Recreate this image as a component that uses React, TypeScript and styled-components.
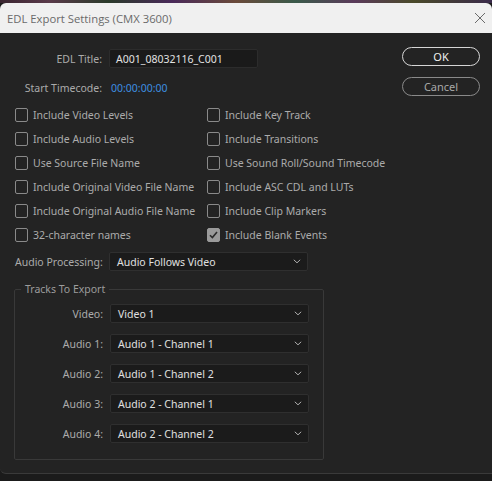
import React from "react";
import styled, { createGlobalStyle } from "styled-components";

const Global = createGlobalStyle`
  html, body { margin: 0; padding: 0; background: #1b1b1b; }
  * { box-sizing: border-box; }
`;

const FONT = `"Noto Sans", "Open Sans", Arial, sans-serif`;

const Window = styled.div`
  width: 492px;
  height: 481px;
  display: flex;
  flex-direction: column;
  background: #1b1b1b;
  font-family: ${FONT};
  overflow: hidden;
`;

const Strip = styled.div`
  height: 3px;
  background: linear-gradient(90deg, #3a2530 0%, #5a3a4a 10%, #2a3a2a 22%, #4a2a5a 35%, #6a4a3a 48%, #3a5a4a 60%, #5a3a5a 72%, #4a4a2a 84%, #3a2a4a 100%);
`;

const TitleBar = styled.div`
  height: 30px;
  background: #f0f0f0;
  display: flex;
  align-items: center;
  justify-content: space-between;
  padding: 0 6px 0 7px;
  border-top-left-radius: 6px;
  border-top-right-radius: 6px;
`;

const Title = styled.span`
  font-family: "Open Sans", "Noto Sans", sans-serif;
  font-size: 11.3px;
  color: #6a6a6a;
`;

const Body = styled.div`
  height: 441px;
  background: #232323;
  border-bottom: 1px solid #3a3a3a;
  border-bottom-left-radius: 6px;
  padding: 14px 12px 0 15px;
  display: flex;
  flex-direction: column;
`;

const Top = styled.div`
  display: flex;
  justify-content: space-between;
`;

const FormGrid = styled.div`
  display: grid;
  grid-template-columns: 87px auto;
  column-gap: 7px;
  align-items: center;
  row-gap: 10px;
  margin-top: 1px;
`;

const Label = styled.span`
  font-size: 10.5px;
  color: #ababab;
  text-align: right;
  white-space: nowrap;
`;

const TextInput = styled.div`
  width: 149px;
  height: 19px;
  background: #1a1a1a;
  border: 1px solid #2c2c2c;
  border-radius: 2px;
  font-size: 10.5px;
  color: #e2e2e2;
  display: flex;
  align-items: center;
  padding-left: 6px;
`;

const Timecode = styled.span`
  font-size: 10.5px;
  color: #3d8ee0;
  padding-left: 2px;
`;

const Buttons = styled.div`
  display: flex;
  flex-direction: column;
  gap: 11px;
`;

const Btn = styled.div<{ $primary?: boolean }>`
  width: 78px;
  height: 19px;
  border-radius: 10px;
  border: 1.5px solid ${(p) => (p.$primary ? "#d6d6d6" : "#8a8a8a")};
  color: ${(p) => (p.$primary ? "#f0f0f0" : "#a8a8a8")};
  font-size: 11px;
  display: flex;
  align-items: center;
  justify-content: center;
`;

const Checks = styled.div`
  display: grid;
  grid-template-columns: 192px auto;
  grid-auto-rows: 24px;
  margin-top: 7px;
`;

const CheckRow = styled.label`
  display: flex;
  align-items: center;
  gap: 5px;
  font-size: 10.5px;
  color: #ababab;
  white-space: nowrap;
`;

const Box = styled.span<{ $on?: boolean }>`
  width: 13px;
  height: 14px;
  border: 1.5px solid ${(p) => (p.$on ? "#9a9a9a" : "#8a8a8a")};
  background: ${(p) => (p.$on ? "#9a9a9a" : "transparent")};
  border-radius: 2px;
  display: flex;
  align-items: center;
  justify-content: center;
  flex-shrink: 0;
`;

const SelectBox = styled.div`
  width: 199px;
  height: 19px;
  background: #1b1b1b;
  border: 1px solid #2f2f2f;
  border-radius: 2px;
  display: flex;
  align-items: center;
  justify-content: space-between;
  padding: 0 6px 0 7px;
  font-size: 10.5px;
  color: #e0e0e0;
`;

const ProcRow = styled.div`
  display: grid;
  grid-template-columns: 87px auto;
  column-gap: 7px;
  align-items: center;
  margin-top: 5px;
`;

const Fieldset = styled.fieldset`
  margin: 11px 0 0 -1px;
  width: 310px;
  height: 178px;
  border: 1px solid #393939;
  border-radius: 2px;
  padding: 8px 0 0 0;
  display: grid;
  grid-template-columns: 88px auto;
  column-gap: 7px;
  row-gap: 11px;
  align-content: start;
  align-items: center;
`;

const Legend = styled.legend`
  font-size: 10.5px;
  color: #9c9c9c;
  padding: 0 4px;
  margin-left: 6px;
`;

const Chevron = () => (
  <svg width="8" height="5" viewBox="0 0 8 5">
    <path d="M0.8 0.8 L4 3.8 L7.2 0.8" fill="none" stroke="#b0b0b0" strokeWidth="1" />
  </svg>
);

const Check = ({ on, label }: { on?: boolean; label: string }) => (
  <CheckRow>
    <Box $on={on}>
      {on && (
        <svg width="9" height="8" viewBox="0 0 9 8">
          <path d="M1 4.2 L3.4 6.6 L8 1" fill="none" stroke="#2a2a2a" strokeWidth="1.6" />
        </svg>
      )}
    </Box>
    {label}
  </CheckRow>
);

const Select = ({ value }: { value: string }) => (
  <SelectBox>
    <span>{value}</span>
    <Chevron />
  </SelectBox>
);

const checks: [string, boolean][] = [
  ["Include Video Levels", false],
  ["Include Key Track", false],
  ["Include Audio Levels", false],
  ["Include Transitions", false],
  ["Use Source File Name", false],
  ["Use Sound Roll/Sound Timecode", false],
  ["Include Original Video File Name", false],
  ["Include ASC CDL and LUTs", false],
  ["Include Original Audio File Name", false],
  ["Include Clip Markers", false],
  ["32-character names", false],
  ["Include Blank Events", true],
];

const tracks: [string, string][] = [
  ["Video:", "Video 1"],
  ["Audio 1:", "Audio 1 - Channel 1"],
  ["Audio 2:", "Audio 1 - Channel 2"],
  ["Audio 3:", "Audio 2 - Channel 1"],
  ["Audio 4:", "Audio 2 - Channel 2"],
];

export default function App() {
  return (
    <Window>
      <Global />
      <Strip />
      <TitleBar>
        <Title>EDL Export Settings (CMX 3600)</Title>
        <svg width="12" height="12" viewBox="0 0 12 12">
          <path d="M1 1 L11 11 M11 1 L1 11" stroke="#6a6a6a" strokeWidth="1" />
        </svg>
      </TitleBar>
      <Body>
        <Top>
          <FormGrid>
            <Label>EDL Title:</Label>
            <TextInput>A001_08032116_C001</TextInput>
            <Label>Start Timecode:</Label>
            <Timecode>00:00:00:00</Timecode>
          </FormGrid>
          <Buttons>
            <Btn $primary>OK</Btn>
            <Btn>Cancel</Btn>
          </Buttons>
        </Top>
        <Checks>
          {checks.map(([l, on]) => (
            <Check key={l} label={l} on={on} />
          ))}
        </Checks>
        <ProcRow>
          <Label>Audio Processing:</Label>
          <Select value="Audio Follows Video" />
        </ProcRow>
        <Fieldset>
          <Legend>Tracks To Export</Legend>
          {tracks.map(([l, v]) => (
            <React.Fragment key={l}>
              <Label>{l}</Label>
              <Select value={v} />
            </React.Fragment>
          ))}
        </Fieldset>
      </Body>
    </Window>
  );
}
